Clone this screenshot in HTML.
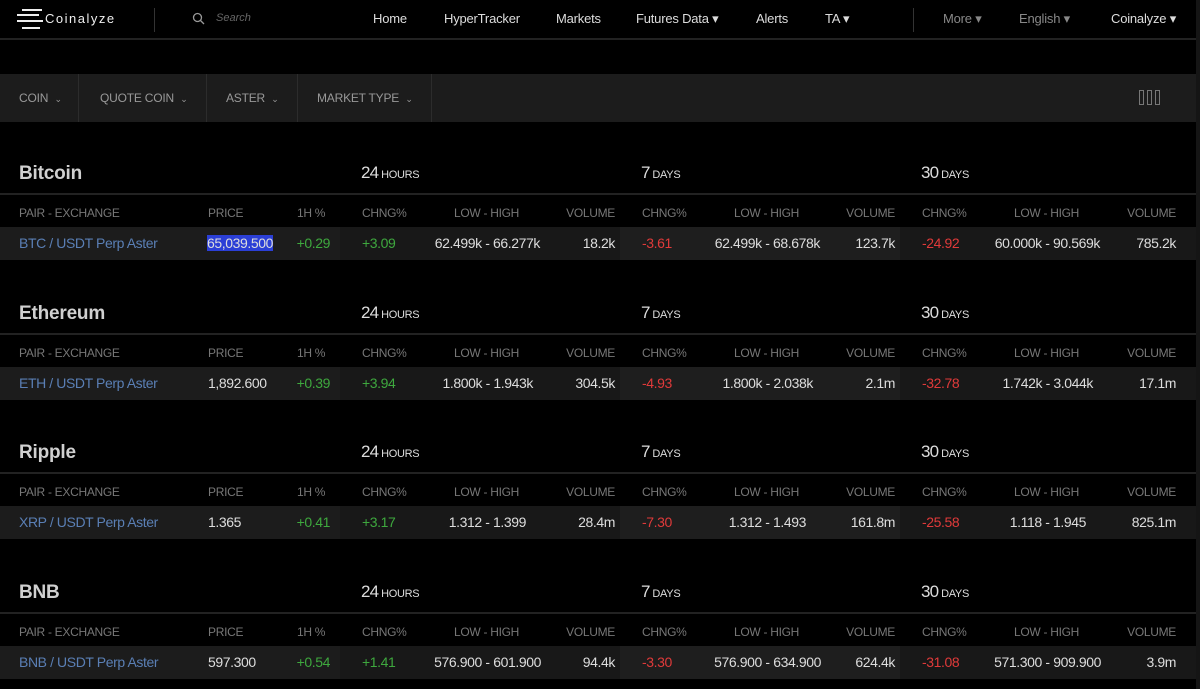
<!DOCTYPE html>
<html><head><meta charset="utf-8"><style>
*{margin:0;padding:0;box-sizing:border-box}
body{width:1200px;height:689px;background:#000;font-family:"Liberation Sans",sans-serif;position:relative;overflow:hidden;color:#ccc}
.a{position:absolute;white-space:nowrap}
.nav{position:absolute;left:0;top:0;width:1196px;height:40px;border-bottom:2px solid #222}
.nv{font-size:13px;color:#ddd;top:11px;letter-spacing:-0.2px}
.gr{color:#888}
.fb{position:absolute;left:0;top:74px;width:1196px;height:48px;background:#1c1c1c}
.fi{position:absolute;top:0;height:48px;line-height:48px;font-size:12px;color:#999;border-right:1px solid #2c2c2c;padding-left:19px;letter-spacing:-0.2px}
.fi span{font-size:9px}
.sec{position:absolute;left:0;width:1196px;height:112px}
.t{font-size:19px;font-weight:bold;color:#d0d0d0;left:19px;top:13px;letter-spacing:-0.2px}
.p{font-size:17px;color:#ddd;top:13px;letter-spacing:-0.8px}.p small{font-size:11px;letter-spacing:-0.3px}
.ln{position:absolute;left:0;top:43px;width:1196px;height:2px;background:#222}
.h{font-size:12px;color:#777;top:56px;letter-spacing:-0.3px}
.row{position:absolute;top:77px;height:33px}
.d{font-size:14px;top:85px;color:#ddd;letter-spacing:-0.4px}
.bl{color:#5a7fb5}.g{color:#3ea83e}.r{color:#e03a3a}
.ra{text-align:right}
</style></head><body>
<div class="nav"></div>
<div class="a" style="left:22px;top:9px;width:20px;height:2px;background:#eee"></div>
<div class="a" style="left:17px;top:14px;width:22px;height:2px;background:#eee"></div>
<div class="a" style="left:17px;top:20px;width:26px;height:2px;background:#eee"></div>
<div class="a" style="left:22px;top:27px;width:18px;height:2px;background:#eee"></div>
<div class="a" style="left:45px;top:11px;font-size:13px;letter-spacing:1.5px;color:#eee">Coinalyze</div>
<div class="a" style="left:154px;top:8px;width:1px;height:24px;background:#333"></div>
<svg class="a" style="left:192px;top:12px" width="14" height="14" viewBox="0 0 14 14"><circle cx="5.5" cy="5.5" r="4" fill="none" stroke="#999" stroke-width="1.3"/><line x1="8.5" y1="8.5" x2="12" y2="12" stroke="#999" stroke-width="1.3"/></svg>
<div class="a" style="left:216px;top:12px;font-size:11px;font-style:italic;color:#666">Search</div>
<div class="a nv" style="left:373px">Home</div>
<div class="a nv" style="left:444px">HyperTracker</div>
<div class="a nv" style="left:556px">Markets</div>
<div class="a nv" style="left:636px">Futures Data ▾</div>
<div class="a nv" style="left:756px">Alerts</div>
<div class="a nv" style="left:825px">TA ▾</div>
<div class="a" style="left:913px;top:8px;width:1px;height:24px;background:#333"></div>
<div class="a nv gr" style="left:943px">More ▾</div>
<div class="a nv gr" style="left:1019px">English ▾</div>
<div class="a nv" style="left:1111px">Coinalyze ▾</div>
<div class="a" style="left:1196px;top:0;width:4px;height:689px;background:#151515"></div>
<div class="fb">
<div class="fi" style="left:0;width:79px">COIN &nbsp;<span>⌄</span></div>
<div class="fi" style="left:79px;width:128px;padding-left:21px">QUOTE COIN &nbsp;<span>⌄</span></div>
<div class="fi" style="left:207px;width:91px">ASTER &nbsp;<span>⌄</span></div>
<div class="fi" style="left:298px;width:134px">MARKET TYPE &nbsp;<span>⌄</span></div>
<div class="a" style="left:1139px;top:16px;width:5px;height:15px;border:1px solid #777"></div>
<div class="a" style="left:1147px;top:16px;width:5px;height:15px;border:1px solid #777"></div>
<div class="a" style="left:1155px;top:16px;width:5px;height:15px;border:1px solid #777"></div>
</div>

<div class="sec" style="top:150px">
<div class="a t">Bitcoin</div>
<div class="a p" style="left:361px">24<small> HOURS</small></div><div class="a p" style="left:641px">7<small> DAYS</small></div><div class="a p" style="left:921px">30<small> DAYS</small></div>
<div class="ln"></div>
<div class="a h" style="left:19px">PAIR - EXCHANGE</div><div class="a h" style="left:208px">PRICE</div><div class="a h" style="left:297px">1H %</div>
<div class="a h" style="left:362px">CHNG%</div><div class="a h" style="left:454px">LOW - HIGH</div><div class="a h ra" style="left:515px;width:100px">VOLUME</div>
<div class="a h" style="left:642px">CHNG%</div><div class="a h" style="left:734px">LOW - HIGH</div><div class="a h ra" style="left:795px;width:100px">VOLUME</div>
<div class="a h" style="left:922px">CHNG%</div><div class="a h" style="left:1014px">LOW - HIGH</div><div class="a h ra" style="left:1076px;width:100px">VOLUME</div>
<div class="row" style="left:0;width:340px;background:#1c1c1c"></div><div class="row" style="left:340px;width:280px;background:#181818"></div><div class="row" style="left:620px;width:280px;background:#1e1e1e"></div><div class="row" style="left:900px;width:296px;background:#181818"></div>
<div class="a d bl" style="left:19px">BTC / USDT Perp Aster</div>
<div class="a d" style="left:207px;background:#2b3fd6;color:#ddd">65,039.500</div>
<div class="a d g ra" style="left:260px;width:70px">+0.29</div>
<div class="a d g" style="left:362px">+3.09</div><div class="a d ra" style="left:400px;width:140px">62.499k - 66.277k</div><div class="a d ra" style="left:515px;width:100px">18.2k</div>
<div class="a d r" style="left:642px">-3.61</div><div class="a d ra" style="left:680px;width:140px">62.499k - 68.678k</div><div class="a d ra" style="left:795px;width:100px">123.7k</div>
<div class="a d r" style="left:922px">-24.92</div><div class="a d ra" style="left:960px;width:140px">60.000k - 90.569k</div><div class="a d ra" style="left:1076px;width:100px">785.2k</div>
</div>

<div class="sec" style="top:290px">
<div class="a t">Ethereum</div>
<div class="a p" style="left:361px">24<small> HOURS</small></div><div class="a p" style="left:641px">7<small> DAYS</small></div><div class="a p" style="left:921px">30<small> DAYS</small></div>
<div class="ln"></div>
<div class="a h" style="left:19px">PAIR - EXCHANGE</div><div class="a h" style="left:208px">PRICE</div><div class="a h" style="left:297px">1H %</div>
<div class="a h" style="left:362px">CHNG%</div><div class="a h" style="left:454px">LOW - HIGH</div><div class="a h ra" style="left:515px;width:100px">VOLUME</div>
<div class="a h" style="left:642px">CHNG%</div><div class="a h" style="left:734px">LOW - HIGH</div><div class="a h ra" style="left:795px;width:100px">VOLUME</div>
<div class="a h" style="left:922px">CHNG%</div><div class="a h" style="left:1014px">LOW - HIGH</div><div class="a h ra" style="left:1076px;width:100px">VOLUME</div>
<div class="row" style="left:0;width:340px;background:#1c1c1c"></div><div class="row" style="left:340px;width:280px;background:#181818"></div><div class="row" style="left:620px;width:280px;background:#1e1e1e"></div><div class="row" style="left:900px;width:296px;background:#181818"></div>
<div class="a d bl" style="left:19px">ETH / USDT Perp Aster</div>
<div class="a d" style="left:208px">1,892.600</div>
<div class="a d g ra" style="left:260px;width:70px">+0.39</div>
<div class="a d g" style="left:362px">+3.94</div><div class="a d ra" style="left:400px;width:133px">1.800k - 1.943k</div><div class="a d ra" style="left:515px;width:100px">304.5k</div>
<div class="a d r" style="left:642px">-4.93</div><div class="a d ra" style="left:680px;width:133px">1.800k - 2.038k</div><div class="a d ra" style="left:795px;width:100px">2.1m</div>
<div class="a d r" style="left:922px">-32.78</div><div class="a d ra" style="left:960px;width:133px">1.742k - 3.044k</div><div class="a d ra" style="left:1076px;width:100px">17.1m</div>
</div>

<div class="sec" style="top:429px">
<div class="a t">Ripple</div>
<div class="a p" style="left:361px">24<small> HOURS</small></div><div class="a p" style="left:641px">7<small> DAYS</small></div><div class="a p" style="left:921px">30<small> DAYS</small></div>
<div class="ln"></div>
<div class="a h" style="left:19px">PAIR - EXCHANGE</div><div class="a h" style="left:208px">PRICE</div><div class="a h" style="left:297px">1H %</div>
<div class="a h" style="left:362px">CHNG%</div><div class="a h" style="left:454px">LOW - HIGH</div><div class="a h ra" style="left:515px;width:100px">VOLUME</div>
<div class="a h" style="left:642px">CHNG%</div><div class="a h" style="left:734px">LOW - HIGH</div><div class="a h ra" style="left:795px;width:100px">VOLUME</div>
<div class="a h" style="left:922px">CHNG%</div><div class="a h" style="left:1014px">LOW - HIGH</div><div class="a h ra" style="left:1076px;width:100px">VOLUME</div>
<div class="row" style="left:0;width:340px;background:#1c1c1c"></div><div class="row" style="left:340px;width:280px;background:#181818"></div><div class="row" style="left:620px;width:280px;background:#1e1e1e"></div><div class="row" style="left:900px;width:296px;background:#181818"></div>
<div class="a d bl" style="left:19px">XRP / USDT Perp Aster</div>
<div class="a d" style="left:208px">1.365</div>
<div class="a d g ra" style="left:260px;width:70px">+0.41</div>
<div class="a d g" style="left:362px">+3.17</div><div class="a d ra" style="left:400px;width:126px">1.312 - 1.399</div><div class="a d ra" style="left:515px;width:100px">28.4m</div>
<div class="a d r" style="left:642px">-7.30</div><div class="a d ra" style="left:680px;width:126px">1.312 - 1.493</div><div class="a d ra" style="left:795px;width:100px">161.8m</div>
<div class="a d r" style="left:922px">-25.58</div><div class="a d ra" style="left:960px;width:126px">1.118 - 1.945</div><div class="a d ra" style="left:1076px;width:100px">825.1m</div>
</div>

<div class="sec" style="top:569px">
<div class="a t">BNB</div>
<div class="a p" style="left:361px">24<small> HOURS</small></div><div class="a p" style="left:641px">7<small> DAYS</small></div><div class="a p" style="left:921px">30<small> DAYS</small></div>
<div class="ln"></div>
<div class="a h" style="left:19px">PAIR - EXCHANGE</div><div class="a h" style="left:208px">PRICE</div><div class="a h" style="left:297px">1H %</div>
<div class="a h" style="left:362px">CHNG%</div><div class="a h" style="left:454px">LOW - HIGH</div><div class="a h ra" style="left:515px;width:100px">VOLUME</div>
<div class="a h" style="left:642px">CHNG%</div><div class="a h" style="left:734px">LOW - HIGH</div><div class="a h ra" style="left:795px;width:100px">VOLUME</div>
<div class="a h" style="left:922px">CHNG%</div><div class="a h" style="left:1014px">LOW - HIGH</div><div class="a h ra" style="left:1076px;width:100px">VOLUME</div>
<div class="row" style="left:0;width:340px;background:#1c1c1c"></div><div class="row" style="left:340px;width:280px;background:#181818"></div><div class="row" style="left:620px;width:280px;background:#1e1e1e"></div><div class="row" style="left:900px;width:296px;background:#181818"></div>
<div class="a d bl" style="left:19px">BNB / USDT Perp Aster</div>
<div class="a d" style="left:208px">597.300</div>
<div class="a d g ra" style="left:260px;width:70px">+0.54</div>
<div class="a d g" style="left:362px">+1.41</div><div class="a d ra" style="left:400px;width:141px">576.900 - 601.900</div><div class="a d ra" style="left:515px;width:100px">94.4k</div>
<div class="a d r" style="left:642px">-3.30</div><div class="a d ra" style="left:680px;width:141px">576.900 - 634.900</div><div class="a d ra" style="left:795px;width:100px">624.4k</div>
<div class="a d r" style="left:922px">-31.08</div><div class="a d ra" style="left:960px;width:141px">571.300 - 909.900</div><div class="a d ra" style="left:1076px;width:100px">3.9m</div>
</div>
</body></html>
